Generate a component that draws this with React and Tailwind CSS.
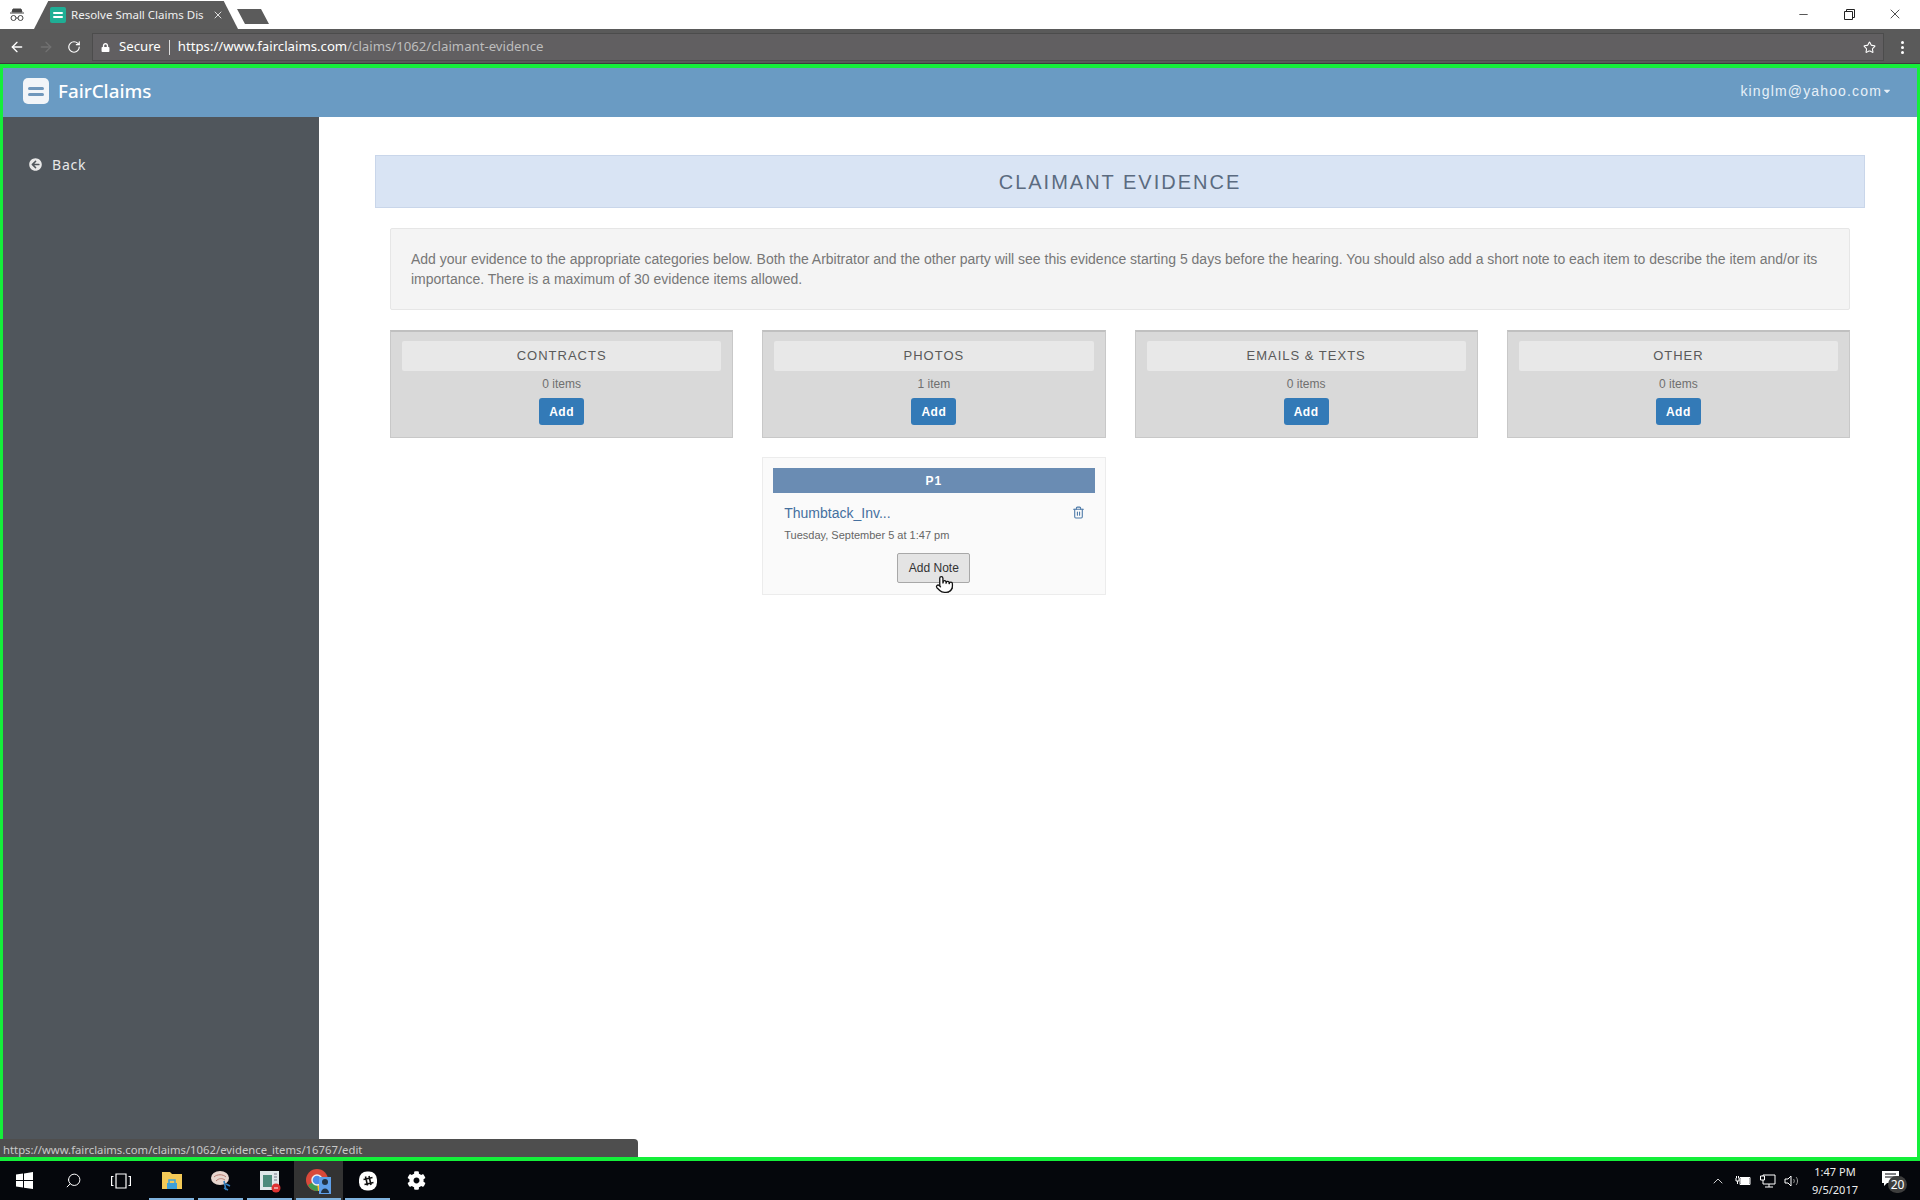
import React from "react";
import { ArrowLeft, ArrowRight, RotateCw, Star, Trash2, Pointer, Search, ChevronUp, X, Minus } from "lucide-react";
import { FaArrowCircleLeft, FaLock, FaCaretDown, FaCog } from "react-icons/fa";

function Logo({ className, bar }) {
  return (
    <div className={className}>
      <span className={`block h-[3px] w-[60%] rounded-sm ${bar}`} />
      <span className={`block h-[3px] w-[60%] rounded-sm ${bar}`} />
    </div>
  );
}

function CategoryCard({ title, count }) {
  return (
    <div className="h-[108px] bg-[#d9d9d9] border border-[#c8c8c8] border-t-2 border-t-[#c0c0c0] px-[11px] pt-[9px] flex flex-col items-center">
      <div className="w-full h-[30px] bg-[#e8e8e8] rounded-[2px] flex items-center justify-center text-[13px] tracking-[1px] text-[#5a5a5a]">{title}</div>
      <div className="mt-[5px] h-[16px] leading-[16px] text-[12px] text-[#6f6f6f]">{count}</div>
      <button className="mt-[6px] h-[27px] px-[10px] bg-[#337ab7] rounded-[3px] text-white text-[12px] font-bold tracking-[0.5px]">Add</button>
    </div>
  );
}

function EvidenceItem() {
  return (
    <div className="col-start-2 h-[138px] bg-[#fafafa] border border-[#ececec] px-[10px] pt-[10px]">
      <div className="h-[25px] bg-[#6a8cb3] text-white text-[12px] font-bold tracking-[1px] flex items-center justify-center">P1</div>
      <div className="flex items-center justify-between pl-[11px] pr-[10px] mt-[10px] h-[20px]">
        <span className="text-[14px] text-[#45709f]">Thumbtack_Inv...</span>
        <Trash2 size={13} className="text-[#4d7aa8] -mt-[2px]" />
      </div>
      <div className="pl-[11px] mt-[4px] text-[11px] leading-[16px] text-[#666]">Tuesday, September 5 at 1:47 pm</div>
      <div className="flex justify-center mt-[10px]">
        <div className="relative">
          <button className="w-[73px] h-[30px] bg-[#e4e4e4] border border-[#a8a8a8] rounded-[2px] text-[12px] text-[#333]">Add Note</button>
          <Pointer size={19} fill="white" strokeWidth={1.6} className="absolute left-[38px] top-[22px] text-[#111]" />
        </div>
      </div>
    </div>
  );
}

function TaskItem({ children, underline, active }) {
  return (
    <div className={`relative w-[49px] h-full flex items-center justify-center ${active ? "bg-[#333]" : ""}`}>
      {children}
      {underline && <span className="absolute bottom-0 left-[2px] right-[2px] h-[2px] bg-[#7fb2de]" />}
    </div>
  );
}

export default function App() {
  return (
    <div className="relative w-full h-screen flex flex-col overflow-hidden bg-white font-['Liberation_Sans',Arial,sans-serif]">
      {/* Title bar */}
      <div className="h-[29px] shrink-0 flex items-end bg-white">
        <div className="w-[34px] h-full flex items-center justify-center">
          <svg width="16" height="14" viewBox="0 0 16 14" fill="none" stroke="#444" strokeWidth="1">
            <path d="M4 1h8l1 3H3z" fill="#444" />
            <path d="M1 5h14" />
            <circle cx="4.5" cy="10" r="2.5" />
            <circle cx="11.5" cy="10" r="2.5" />
            <path d="M7 10h2" />
          </svg>
        </div>
        <div className="w-[204px] h-[28px] bg-[#5b5b5b] [clip-path:polygon(0_100%,7%_0,93%_0,100%_100%)] flex items-center pl-[16px] pr-[14px] gap-[5px] text-white">
          <Logo className="w-[16px] h-[16px] bg-[#1fae95] rounded-[2px] flex flex-col items-center justify-center gap-[2px] shrink-0" bar="bg-white !h-[2px]" />
          <span className="flex-1 whitespace-nowrap text-[11.5px] font-['Noto_Sans',sans-serif] text-[#f0f0f0]">Resolve Small Claims Dis</span>
          <X size={12} className="shrink-0 text-[#ddd]" />
        </div>
        <div className="ml-[-1px] mb-[5px] w-[32px] h-[15px] bg-[#5b5b5b] [clip-path:polygon(0_0,75%_0,100%_100%,25%_100%)]" />
        <div className="flex-1" />
        <div className="flex items-center self-start h-[28px] pr-[2px] text-[#222]">
          <div className="w-[46px] flex justify-center"><Minus size={13} strokeWidth={1.4} /></div>
          <div className="w-[46px] flex justify-center">
            <svg width="11" height="11" viewBox="0 0 11 11" fill="none" stroke="#222"><path d="M.5 2.5h8v8h-8zM2.5 2.5v-2h8v8h-2" /></svg>
          </div>
          <div className="w-[46px] flex justify-center"><X size={16} strokeWidth={1.2} /></div>
        </div>
      </div>

      {/* Toolbar */}
      <div className="h-[35px] shrink-0 bg-[#5a5a5a] flex items-center pt-[2px] border-b border-[#3c3c3c]">
        <div className="w-[92px] flex items-center pl-[9px] gap-[13px] text-white">
          <ArrowLeft size={16} />
          <ArrowRight size={16} className="text-[#717171]" />
          <RotateCw size={14} />
        </div>
        <div className="flex-1 h-[28px] bg-[#615f61] border border-[#4c4c4c] flex items-center pl-[8px] pr-[7px] text-[13.2px] font-['Noto_Sans',sans-serif]">
          <FaLock size={9} className="text-white" />
          <span className="ml-[9px] text-white">Secure</span>
          <span className="mx-[8px] w-px h-[15px] bg-[#ddd]" />
          <span className="text-white">https://www.fairclaims.com</span>
          <span className="text-[#bdbdbd]">/claims/1062/claimant-evidence</span>
          <div className="flex-1" />
          <Star size={13} className="text-white" />
        </div>
        <div className="w-[36px] flex flex-col items-center gap-[2px]">
          <span className="w-[3px] h-[3px] rounded-full bg-white" />
          <span className="w-[3px] h-[3px] rounded-full bg-white" />
          <span className="w-[3px] h-[3px] rounded-full bg-white" />
        </div>
      </div>

      {/* Captured page with green frame */}
      <div className="flex-1 min-h-0 border-x-[3px] border-y-[4px] border-[#14ef3a] flex flex-col">
        <header className="h-[49px] shrink-0 bg-[#6a9bc3] flex items-center justify-between pl-[20px] pr-[25px] pb-[3px]">
          <div className="flex items-center gap-[9px]">
            <Logo className="w-[26px] h-[26px] rounded-[5px] bg-[#f2f5f8] flex flex-col items-center justify-center gap-[3px]" bar="bg-[#6f97bb]" />
            <span className="text-[18.8px] font-medium text-white font-['Noto_Sans',sans-serif]">FairClaims</span>
          </div>
          <div className="flex items-center text-[14px] tracking-[1.15px] text-[#e6f0f8]">
            kinglm@yahoo.com
            <FaCaretDown size={10} />
          </div>
        </header>
        <div className="flex-1 min-h-0 flex">
          <aside className="w-[316px] shrink-0 bg-[#50565c] pl-[26px] pt-[37px]">
            <div className="flex items-center gap-[10px] text-[#e8e8e8] text-[14px] tracking-[0.8px] font-['Noto_Sans',sans-serif]">
              <FaArrowCircleLeft size={13} />
              <span>Back</span>
            </div>
          </aside>
          <main className="flex-1 min-w-0 pt-[38px]">
            <div className="ml-[56px] mr-[52px] h-[53px] bg-[#d9e4f4] border border-[#c9d6ea] flex items-center justify-center text-[20px] tracking-[2px] text-[#5b6b80]">CLAIMANT EVIDENCE</div>
            <div className="ml-[71px] mr-[67px] mt-[20px]">
              <div className="h-[82px] bg-[#f4f4f4] border border-[#e6e6e6] rounded-[2px] px-[20px] pt-[20px] text-[14px] leading-[20px] text-[#777]">
                Add your evidence to the appropriate categories below. Both the Arbitrator and the other party will see this evidence starting 5 days before the hearing. You should also add a short note to each item to describe the item and/or its importance. There is a maximum of 30 evidence items allowed.
              </div>
              <div className="grid grid-cols-4 gap-x-[29px] gap-y-[19px] mt-[20px]">
                <CategoryCard title="CONTRACTS" count="0 items" />
                <CategoryCard title="PHOTOS" count="1 item" />
                <CategoryCard title="EMAILS & TEXTS" count="0 items" />
                <CategoryCard title="OTHER" count="0 items" />
                <EvidenceItem />
              </div>
            </div>
          </main>
        </div>
      </div>

      {/* Status bubble */}
      <div className="absolute left-0 bottom-[43px] w-[638px] h-[18px] bg-[#4e4e4e] rounded-tr-[4px] pl-[3px] text-[11.3px] leading-[21px] text-[#c9c9c9] font-['Noto_Sans',sans-serif] whitespace-nowrap overflow-hidden">
        https://www.fairclaims.com/claims/1062/evidence_items/16767/edit
      </div>

      {/* Taskbar */}
      <div className="h-[39px] shrink-0 bg-[#05070c] flex items-center text-white">
        <TaskItem>
          <svg width="17" height="17" viewBox="0 0 17 17" fill="#fff"><path d="M0 2.5 7 1.5v6.5H0zM8 1.4 17 0v8H8zM0 9h7v6.5L0 14.5zM8 9h9v8L8 15.7z" /></svg>
        </TaskItem>
        <TaskItem><Search size={17} strokeWidth={1.4} className="-scale-x-100" /></TaskItem>
        <TaskItem>
          <div className="-ml-[4px]">
            <svg width="20" height="16" viewBox="0 0 20 16" fill="none" stroke="#fff" strokeWidth="1.2"><path d="M5 1h10v14H5zM2.5 3.5H.6v9h1.9M17.5 3.5h1.9v9h-1.9" /></svg>
          </div>
        </TaskItem>
        <TaskItem underline>
          <svg width="22" height="19" viewBox="0 0 22 19"><path d="M1 1h8l2 2h10v15H1z" fill="#f3c957" /><path d="M6 18v-6h10v6z" fill="#3fa0d8" /><path d="M8 12V9h6v3" fill="none" stroke="#3fa0d8" strokeWidth="1.5" /></svg>
        </TaskItem>
        <TaskItem underline>
          <svg width="24" height="24" viewBox="0 0 24 24"><ellipse cx="11" cy="9" rx="9" ry="7" fill="#e7d6cf" /><path d="M5 8c3-3 9-3 12 0M7 12c3-3 6-3 9-1" stroke="#b77b70" fill="none" /><path d="M15 12l2 9M17 15l4 2M15 19l4 2" stroke="#2f7fc0" strokeWidth="1.6" fill="none" /></svg>
        </TaskItem>
        <TaskItem underline>
          <svg width="24" height="24" viewBox="0 0 24 24"><path d="M2 2h19v19H2z" fill="#dfe7ea" /><path d="M5 6h9v12H5z" fill="#4c8a7c" /><path d="M16 5h3M16 8h3M16 11h3" stroke="#778" /><circle cx="18" cy="19" r="4.5" fill="#d33" /><path d="M16 19h4" stroke="#fff" /></svg>
        </TaskItem>
        <TaskItem underline active>
          <svg width="28" height="28" viewBox="0 0 28 28"><circle cx="12" cy="13" r="11" fill="#d9493a" /><path d="M12 13 3 18a11 11 0 0 0 10 6z" fill="#3f9c50" /><path d="M12 13h11a11 11 0 0 1-10 11z" fill="#f3c32f" /><circle cx="12" cy="13" r="5" fill="#4a8ae8" stroke="#eee" strokeWidth="1.5" /><path d="M14 10h12v17H14z" fill="#5f9fe8" /><circle cx="20" cy="15" r="3" fill="#234" /><path d="M16 26c0-6 8-6 8 0z" fill="#234" /></svg>
        </TaskItem>
        <TaskItem underline>
          <svg width="20" height="20" viewBox="0 0 20 20"><rect x="1" y="0.5" width="18" height="19" rx="8" fill="#fff" /><path d="M7.5 5.5l2 9M11 5l2 9M5.5 8.5l9-2M6.5 13.5l9-2" stroke="#111" strokeWidth="1.6" /></svg>
        </TaskItem>
        <TaskItem><FaCog size={19} /></TaskItem>
        <div className="flex-1" />
        <div className="flex items-center h-full pr-[14px]">
          <ChevronUp size={16} strokeWidth={1.2} className="mr-[9px]" />
          <svg className="mr-[9px]" width="16" height="11" viewBox="0 0 16 11" fill="none" stroke="#fff"><path d="M5 2.5h10v7H5z" /><path d="M6 3.5h8v5H6z" fill="#fff" /><path d="M1 3v3h3V3M1.5 1v2M3.5 1v2M2.5 6v3" /></svg>
          <svg className="mr-[8px]" width="16" height="14" viewBox="0 0 16 14" fill="none" stroke="#fff"><path d="M3 1h12v9H3zM5 13h8M9 10v3" /><path d="M.5 2h4v4h-4z" fill="#05070c" /></svg>
          <svg className="mr-[7px]" width="15" height="14" viewBox="0 0 15 14" fill="none" stroke="#fff"><path d="M1 5h3l3-3v10L4 9H1z" /><path d="M9.5 5c1 1 1 3 0 4M12 3c2 2 2 6 0 8" stroke="#999" /></svg>
          <div className="w-[58px] flex flex-col items-center text-[11px] leading-[18px] font-['Noto_Sans',sans-serif] text-[#eee]">
            <span>1:47 PM</span>
            <span>9/5/2017</span>
          </div>
          <div className="relative ml-[18px] w-[24px] h-[24px]">
            <svg width="18" height="16" viewBox="0 0 18 16" className="absolute left-0 top-[2px]"><path d="M0 0h17v12H5l-3 3v-3H0z" fill="#fff" /><path d="M3 3h11M3 6h11" stroke="#05070c" /></svg>
            <span className="absolute left-[6px] top-[7px] w-[19px] h-[17px] rounded-full bg-[#3d3d3d] text-white text-[12px] leading-[17px] text-center font-['Noto_Sans',sans-serif]">20</span>
          </div>
        </div>
      </div>
    </div>
  );
}
